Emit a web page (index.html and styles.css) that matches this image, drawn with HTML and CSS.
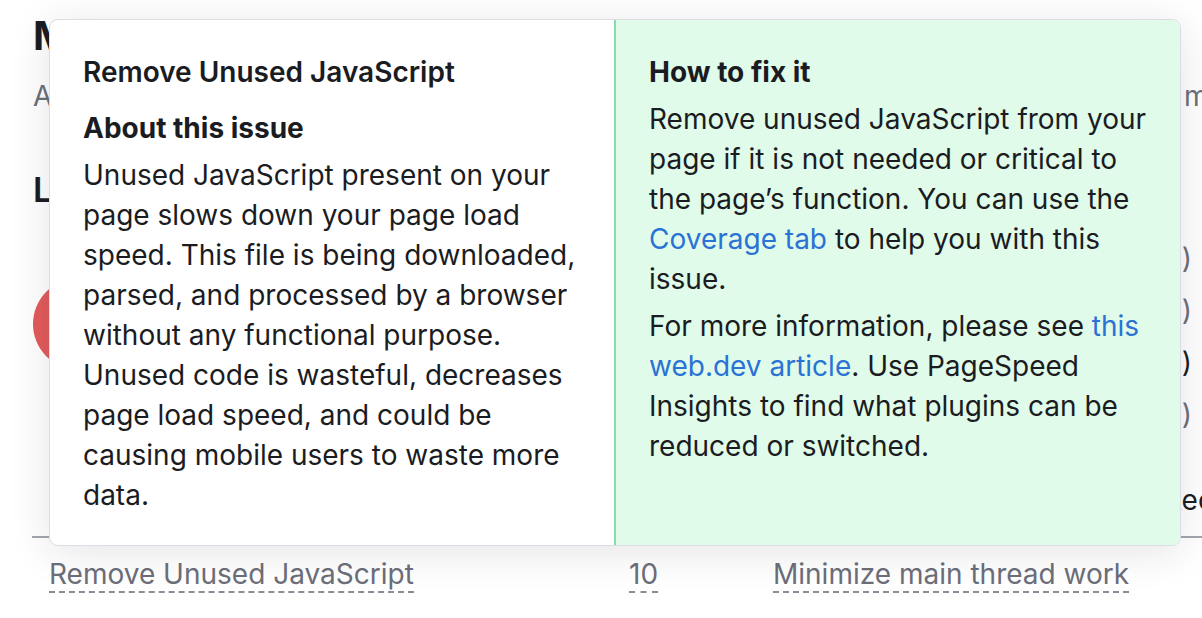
FILE: index.html
```html
<!DOCTYPE html>
<html lang="en">
<head>
  <meta charset="UTF-8">
  <title>Site Audit - Issues</title>
  <meta name="viewport" content="width=device-width, initial-scale=1.0">
  <link rel="stylesheet" href="styles.css">
</head>
<body>
  <div class="page">
    <h1 class="page-title">Mobile performance</h1>
    <p class="page-sub"><span class="sub-lead">A summary of the performance issues that slow down this website when it loads on</span><span>mobile devices</span></p>

    <h2 class="section-title">Lab data</h2>
    <div class="score-row">
      <div class="score-gauge"></div>
      <ul class="metrics">
        <li class="metric">First Contentful Paint (3.1 s)</li>
        <li class="metric">Speed Index (5.4 s)</li>
        <li class="metric strong">Largest Contentful Paint (8.0 s)</li>
        <li class="metric">Total Blocking Time (640 ms)</li>
      </ul>
    </div>
    <p class="score-note">Recently checked pages</p>

    <div class="issue-table">
      <div class="issue-row">
        <span class="cell cell-name"><span class="dotted">Remove Unused JavaScript</span></span>
        <span class="cell cell-count"><span class="dotted">10</span></span>
        <span class="cell cell-name"><span class="dotted">Minimize main thread work</span></span>
      </div>
    </div>
  </div>

  <div class="popover">
    <div class="pop-col">
      <h3 class="pop-title">Remove Unused JavaScript</h3>
      <h4 class="pop-heading">About this issue</h4>
      <p class="pop-text">Unused JavaScript present on your page slows down your page load speed. This file is being downloaded, parsed, and processed by a browser without any functional purpose. Unused code is wasteful, decreases page load speed, and could be causing mobile users to waste more data.</p>
    </div>
    <div class="pop-col pop-fix">
      <h4 class="pop-heading">How to fix it</h4>
      <p class="pop-text">Remove unused JavaScript from your page if it is not needed or critical to the page’s function. You can use the <a href="#">Coverage tab</a> to help you with this issue.</p>
      <p class="pop-text">For more information, please see <a href="#">this web.dev article</a>. Use PageSpeed Insights to find what plugins can be reduced or switched.</p>
    </div>
  </div>
</body>
</html>
```

FILE: styles.css
```css
body {
  font-family: Inter, "Noto Sans", sans-serif;
  background-color: #fff;
  color: #1b1c22;
  margin: 0;
  overflow: hidden;
}
.page {
  padding: 12px 0 0 33px;
  width: 1400px;
}
.page-title {
  font-size: 40px;
  font-weight: 700;
  line-height: 48px;
  margin: 0;
}
.page-sub {
  font-size: 28px;
  color: #6c6e79;
  line-height: 40px;
  margin: 16px 0 0;
  white-space: nowrap;
}
.sub-lead {
  display: inline-block;
  width: 1151px;
  overflow: hidden;
  vertical-align: top;
}
.section-title {
  font-size: 34px;
  font-weight: 600;
  line-height: 40px;
  margin: 54px 0 0;
}
.score-row {
  display: flex;
  align-items: flex-start;
  justify-content: space-between;
  width: 1159px;
  margin-top: 22px;
}
.score-gauge {
  width: 92px;
  height: 92px;
  margin-top: 46px;
  border-radius: 50%;
  background: #e35a5a;
}
.metrics {
  list-style: none;
  margin: 0;
  padding: 0;
  text-align: right;
}
.metric {
  font-size: 28px;
  line-height: 52px;
  color: #6c6e79;
  white-space: nowrap;
}
.metric.strong {
  color: #1b1c22;
}
.score-note {
  font-size: 28px;
  line-height: 40px;
  margin: 40px 0 0 1131px;
  white-space: nowrap;
}
.issue-table {
  border-top: 2px solid #a3a5ae;
  margin-top: 16px;
  width: 1200px;
  margin-left: -1px;
}
.issue-row {
  display: flex;
  padding: 16px 0 0 17px;
  font-size: 28px;
  line-height: 40px;
  color: #6c6e79;
}
.cell-name:first-child {
  width: 580px;
}
.cell-count {
  width: 144px;
}
.dotted {
  border-bottom: 2px dashed #8a8c96;
}

/* popover with the issue details */
.popover {
  position: absolute;
  left: 49px;
  top: 19px;
  width: 1130px;
  display: flex;
  background: #fff;
  border: 1px solid #dcdce4;
  border-radius: 9px;
  overflow: hidden;
  box-shadow: 0 6px 40px rgba(30, 30, 60, 0.12);
}
.pop-col {
  flex: 1;
  padding: 32px 33px 23px 33px;
}
.pop-fix {
  background: #e0fbea;
  border-left: 2px solid #8adbae;
}
.pop-title {
  font-size: 28px;
  font-weight: 600;
  line-height: 40px;
  margin: 0 0 16px;
}
.pop-heading {
  font-size: 28px;
  font-weight: 700;
  line-height: 40px;
  margin: 0 0 7px;
}
.pop-text {
  font-size: 28px;
  line-height: 40px;
  margin: 0 0 7px;
}
.pop-text a {
  color: #2a72d4;
  text-decoration: none;
}
```
